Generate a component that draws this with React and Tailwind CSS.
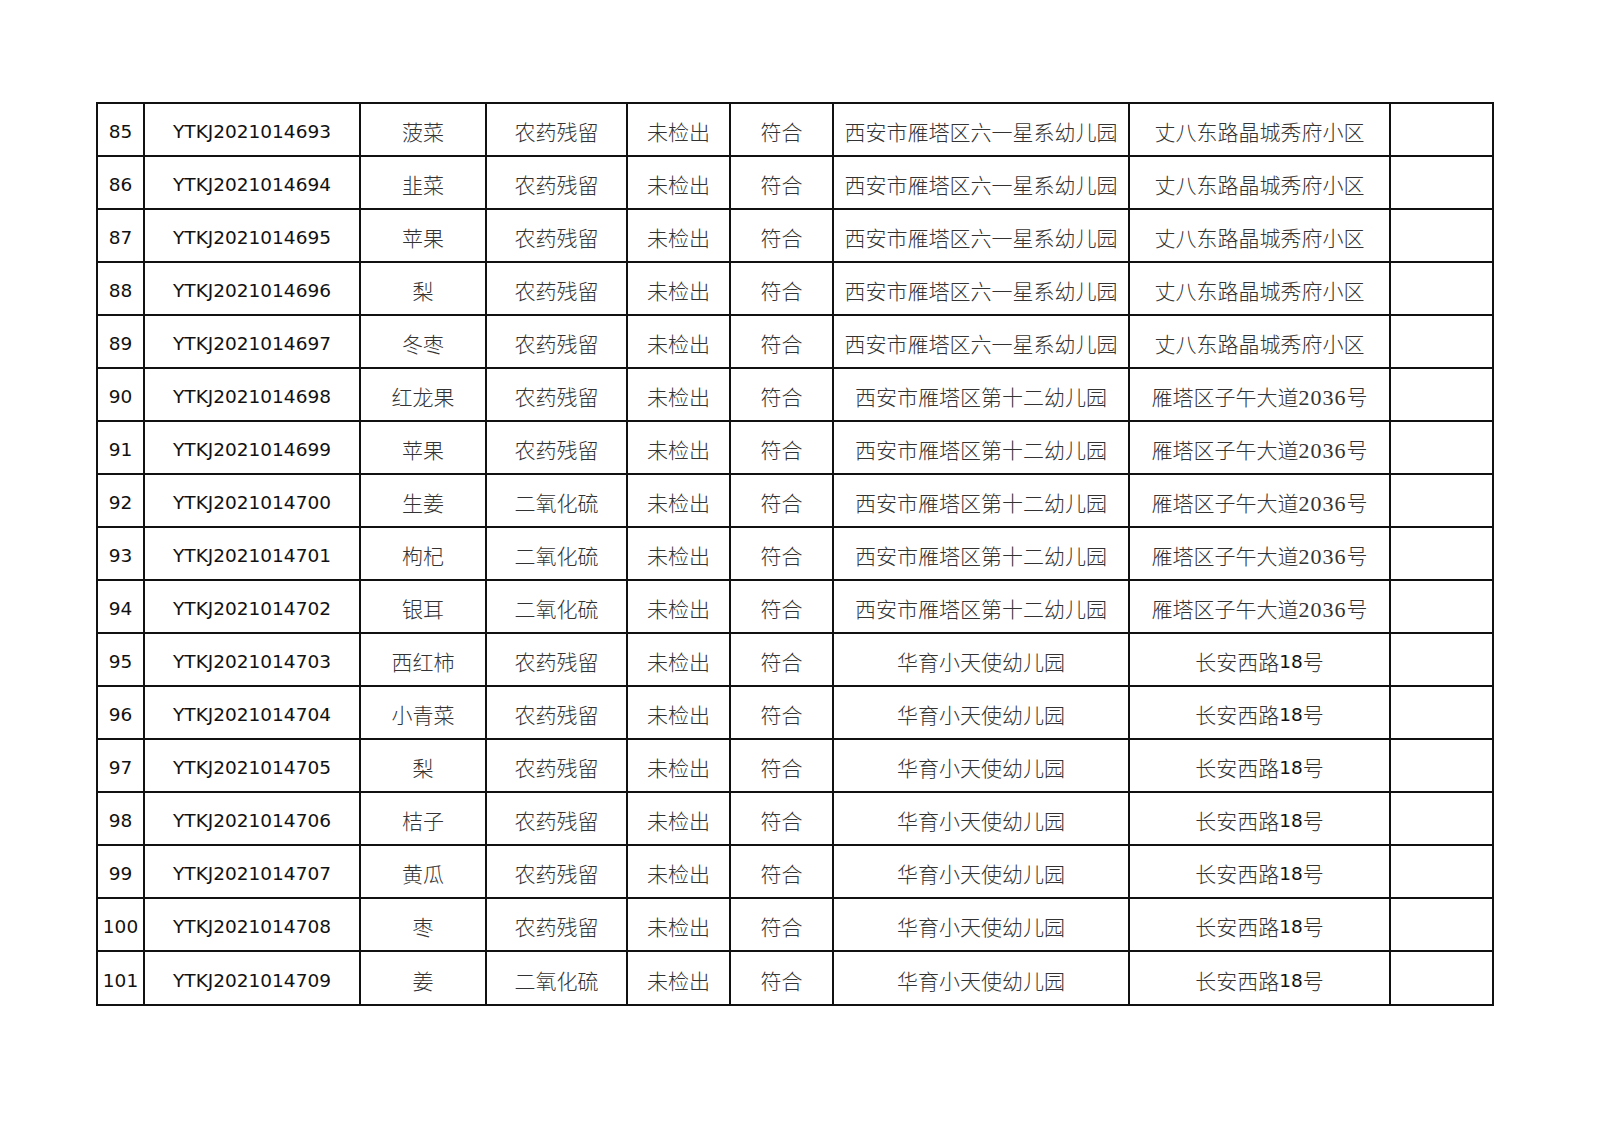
const rows = [
  ['85', 'YTKJ2021014693', '菠菜', '农药残留', 'A'],
  ['86', 'YTKJ2021014694', '韭菜', '农药残留', 'A'],
  ['87', 'YTKJ2021014695', '苹果', '农药残留', 'A'],
  ['88', 'YTKJ2021014696', '梨', '农药残留', 'A'],
  ['89', 'YTKJ2021014697', '冬枣', '农药残留', 'A'],
  ['90', 'YTKJ2021014698', '红龙果', '农药残留', 'B'],
  ['91', 'YTKJ2021014699', '苹果', '农药残留', 'B'],
  ['92', 'YTKJ2021014700', '生姜', '二氧化硫', 'B'],
  ['93', 'YTKJ2021014701', '枸杞', '二氧化硫', 'B'],
  ['94', 'YTKJ2021014702', '银耳', '二氧化硫', 'B'],
  ['95', 'YTKJ2021014703', '西红柿', '农药残留', 'C'],
  ['96', 'YTKJ2021014704', '小青菜', '农药残留', 'C'],
  ['97', 'YTKJ2021014705', '梨', '农药残留', 'C'],
  ['98', 'YTKJ2021014706', '桔子', '农药残留', 'C'],
  ['99', 'YTKJ2021014707', '黄瓜', '农药残留', 'C'],
  ['100', 'YTKJ2021014708', '枣', '农药残留', 'C'],
  ['101', 'YTKJ2021014709', '姜', '二氧化硫', 'C'],
]

const places = {
  A: ['西安市雁塔区六一星系幼儿园', <>丈八东路晶城秀府小区</>],
  B: [
    '西安市雁塔区第十二幼儿园',
    <>雁塔区子午大道<span className="font-['Liberation_Serif',serif] text-[22px] tracking-[1px]">2036</span>号</>,
  ],
  C: ['华育小天使幼儿园', <>长安西路<span className="text-[18.5px] font-normal text-[#111] font-['DejaVu_Sans',sans-serif]">18</span>号</>],
}

const latin = "font-['DejaVu_Sans','Noto_Sans_CJK_SC',sans-serif] text-[18.5px] text-[#111]"
const cjk = "font-['Noto_Sans_CJK_SC',sans-serif] font-light text-[21px] text-[#333]"

function Cell({ children, tall, className = '' }) {
  return (
    <div className={`bg-white ${tall ? 'h-[52px]' : 'h-[51px]'} pt-[5px] flex items-center justify-center whitespace-nowrap overflow-hidden ${className}`}>
      {children}
    </div>
  )
}

export default function App() {
  return (
    <div className="w-[1600px] h-[1131px] bg-white pt-[102px] pl-[96px]">
      <div className="inline-grid grid-cols-[45px_214px_124px_139px_101px_101px_294px_259px_101px] gap-[2px] p-[2px] bg-[#111]">
        {rows.map(([no, code, item, test, loc], i) => {
          const tall = i === 16
          return (
            <div key={no} className="contents">
              <Cell tall={tall} className={latin}>{no}</Cell>
              <Cell tall={tall} className={latin}>{code}</Cell>
              <Cell tall={tall} className={cjk}>{item}</Cell>
              <Cell tall={tall} className={cjk}>{test}</Cell>
              <Cell tall={tall} className={cjk}>未检出</Cell>
              <Cell tall={tall} className={cjk}>符合</Cell>
              <Cell tall={tall} className={cjk}>{places[loc][0]}</Cell>
              <Cell tall={tall} className={cjk}>{places[loc][1]}</Cell>
              <Cell tall={tall} />
            </div>
          )
        })}
      </div>
    </div>
  )
}
